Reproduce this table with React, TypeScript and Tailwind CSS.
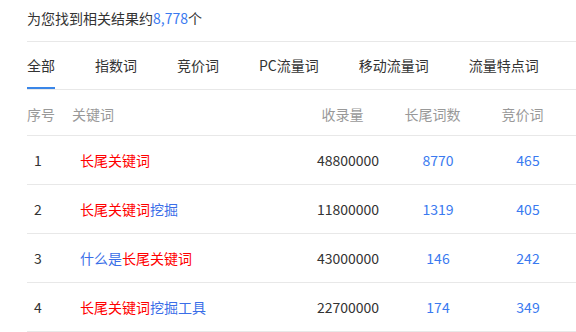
const FONT = 'font-["Microsoft_YaHei","Noto_Sans_CJK_SC",sans-serif]';

const tabs = ['全部', '指数词', '竞价词', 'PC流量词', '移动流量词', '流量特点词'];

type Part = { text: string; hit: boolean };

interface Row {
  no: number;
  keyword: Part[];
  indexed: string;
  longTail: string;
  bid: string;
}

const rows: Row[] = [
  { no: 1, keyword: [{ text: '长尾关键词', hit: true }], indexed: '48800000', longTail: '8770', bid: '465' },
  {
    no: 2,
    keyword: [
      { text: '长尾关键词', hit: true },
      { text: '挖掘', hit: false }
    ],
    indexed: '11800000',
    longTail: '1319',
    bid: '405'
  },
  {
    no: 3,
    keyword: [
      { text: '什么是', hit: false },
      { text: '长尾关键词', hit: true }
    ],
    indexed: '43000000',
    longTail: '146',
    bid: '242'
  },
  {
    no: 4,
    keyword: [
      { text: '长尾关键词', hit: true },
      { text: '挖掘工具', hit: false }
    ],
    indexed: '22700000',
    longTail: '174',
    bid: '349'
  }
];

export default function App() {
  return (
    <div className={`${FONT} w-[576px] h-[332px] overflow-hidden bg-white text-[14px] text-[#333]`}>
      <div className="ml-[27px]">
        {/* result summary */}
        <div className="h-[42px] pt-[8px] leading-[21px] border-b border-[#e8e8e8]">
          为您找到相关结果约<span className="text-[#3a7af0]">8,778</span>个
        </div>

        {/* tabs */}
        <div className="flex gap-[40px] border-b border-[#e8e8e8]">
          {tabs.map((t, i) => (
            <div key={t} className="relative h-[47px] flex items-center whitespace-nowrap">
              {t}
              {i === 0 && <div className="absolute left-0 right-0 bottom-0 h-[2px] bg-[#3a86e8]"></div>}
            </div>
          ))}
        </div>

        {/* table header */}
        <div className="grid grid-cols-[45px_225.5px_90px_90px_90px] h-[46px] pt-[3px] items-center border-b border-[#e8e8e8] text-[#999]">
          <div>序号</div>
          <div>关键词</div>
          <div className="text-center">收录量</div>
          <div className="text-center">长尾词数</div>
          <div className="text-center">竞价词</div>
        </div>

        {/* table rows */}
        {rows.map((r) => (
          <div
            key={r.no}
            className="grid grid-cols-[22px_254px_90px_90px_90px] h-[49px] items-center border-b border-[#e8e8e8]"
          >
            <div className="text-center">{r.no}</div>
            <div className="pl-[31px]">
              {r.keyword.map((p, i) => (
                <span key={i} className={p.hit ? 'text-[#ff0000]' : 'text-[#3a6ee8]'}>
                  {p.text}
                </span>
              ))}
            </div>
            <div className="text-center">{r.indexed}</div>
            <div className="text-center text-[#3a7af0]">{r.longTail}</div>
            <div className="text-center text-[#3a7af0]">{r.bid}</div>
          </div>
        ))}
      </div>
    </div>
  );
}
